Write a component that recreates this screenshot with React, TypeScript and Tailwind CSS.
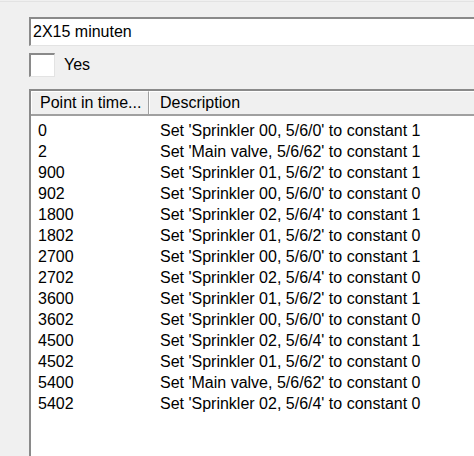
const rows: [string, string][] = [
  ['0', "Set 'Sprinkler 00, 5/6/0' to constant 1"],
  ['2', "Set 'Main valve, 5/6/62' to constant 1"],
  ['900', "Set 'Sprinkler 01, 5/6/2' to constant 1"],
  ['902', "Set 'Sprinkler 00, 5/6/0' to constant 0"],
  ['1800', "Set 'Sprinkler 02, 5/6/4' to constant 1"],
  ['1802', "Set 'Sprinkler 01, 5/6/2' to constant 0"],
  ['2700', "Set 'Sprinkler 00, 5/6/0' to constant 1"],
  ['2702', "Set 'Sprinkler 02, 5/6/4' to constant 0"],
  ['3600', "Set 'Sprinkler 01, 5/6/2' to constant 1"],
  ['3602', "Set 'Sprinkler 00, 5/6/0' to constant 0"],
  ['4500', "Set 'Sprinkler 02, 5/6/4' to constant 1"],
  ['4502', "Set 'Sprinkler 01, 5/6/2' to constant 0"],
  ['5400', "Set 'Main valve, 5/6/62' to constant 0"],
  ['5402', "Set 'Sprinkler 02, 5/6/4' to constant 0"],
];

export default function App() {
  return (
    <div
      className="w-[474px] h-[456px] overflow-hidden bg-[#f0f0f0] text-[16px] leading-none text-black"
      style={{ fontFamily: '"Liberation Sans", Arial, sans-serif' }}
    >
      <div className="h-[2px] border-b border-[#e3e3e3]" />

      <div className="pl-[29px] pt-[15px]">
        {/* Name field */}
        <div className="h-[29px] w-[460px] bg-white border-t-2 border-l-2 border-t-[#8a8a8a] border-l-[#8a8a8a] border-b border-b-[#e3e3e3] flex items-center pl-[2px]">
          2X15 minuten
        </div>

        {/* Checkbox */}
        <div className="flex items-center mt-[7px] h-[24px]">
          <div className="w-[26px] h-[24px] bg-white border-t-2 border-l-2 border-t-[#8a8a8a] border-l-[#8a8a8a] border-b border-r border-b-[#e3e3e3] border-r-[#e3e3e3]" />
          <span className="ml-[9px]">Yes</span>
        </div>

        {/* List */}
        <div className="mt-[12px] w-[460px] h-[380px] bg-white border-t-2 border-l-2 border-t-[#8a8a8a] border-l-[#8a8a8a]">
          <div className="flex h-[25px] bg-[#f0f0f0] border-b-2 border-b-[#a0a0a0]">
            <div className="w-[118px] flex items-center pl-[8px] border-r border-r-[#a0a0a0] border-l border-l-white border-t border-t-white">
              Point in time...
            </div>
            <div className="flex-1 flex items-center pl-[10px] border-l border-l-white border-t border-t-white">
              Description
            </div>
          </div>
          <div className="pt-[4px]">
            {rows.map(([t, d], i) => (
              <div key={i} className="flex h-[21px] items-center">
                <div className="w-[118px] pl-[7px]">{t}</div>
                <div className="pl-[11px] whitespace-nowrap">{d}</div>
              </div>
            ))}
          </div>
        </div>
      </div>
    </div>
  );
}
